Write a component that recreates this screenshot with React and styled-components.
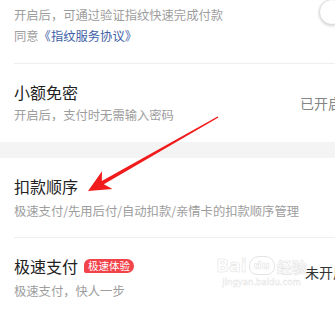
import React from "react";
import styled, { createGlobalStyle } from "styled-components";

const GlobalStyle = createGlobalStyle`
  html, body { margin: 0; padding: 0; background: #fff; overflow: hidden; }
  body { font-family: "Noto Sans CJK SC", "Noto Sans", sans-serif; }
`;

const Page = styled.div`
  position: relative;
  width: 375px;
  height: 313px;
  background: #fff;
  overflow: hidden;
`;

const Row = styled.div`
  display: flex;
  align-items: ${(p) => (p.$top ? "flex-start" : "center")};
  padding: ${(p) => p.$pad};
`;

const TextBlock = styled.div`
  flex: 1;
  min-width: 0;
  display: flex;
  flex-direction: column;
`;

const Title = styled.div`
  display: flex;
  align-items: center;
  gap: 6px;
  font-size: 16px;
  line-height: 22px;
  color: #222;
  white-space: nowrap;
`;

const Sub = styled.div`
  font-size: 12.3px;
  line-height: ${(p) => p.$lh || "18px"};
  color: #9d9d9d;
  margin-top: ${(p) => p.$mt || "0px"};
  white-space: nowrap;
`;

const Link = styled.span`
  color: #3f5ea6;
`;

const Divider = styled.div`
  height: 1px;
  margin-left: 14px;
  background: #eeeeee;
`;

const Band = styled.div`
  height: 16px;
  background: #f4f4f4;
`;

const Badge = styled.span`
  display: inline-flex;
  align-items: center;
  height: 14px;
  padding: 0 4px;
  border-radius: 6px 7px 7px 2px;
  background: #f2424a;
  color: #fff;
  font-size: 10.5px;
  line-height: 14px;
`;

const Value = styled.div`
  display: flex;
  align-items: center;
  gap: 5px;
  font-size: 14px;
  line-height: 20px;
  color: ${(p) => p.$color};
  padding-right: ${(p) => p.$pr};
  margin-bottom: ${(p) => p.$mb || "0px"};
  white-space: nowrap;
`;

const Knob = styled.div`
  width: 26px;
  height: 26px;
  margin-top: -6px;
  margin-right: 30px;
  border-radius: 50%;
  background: #fff;
  border: 1px solid #dcdcdc;
  box-shadow: 0 1px 3px rgba(0, 0, 0, 0.18);
  box-sizing: border-box;
`;

const Overlay = styled.svg`
  position: absolute;
  left: 0;
  top: 0;
  pointer-events: none;
`;

const Watermark = styled.div`
  position: absolute;
  left: 214px;
  top: 256px;
  width: 95px;
  display: flex;
  flex-direction: column;
  align-items: center;
  pointer-events: none;
  color: rgba(255, 255, 255, 0.7);
  -webkit-text-stroke: 0.6px #e4e4e4;
  font-family: "DejaVu Sans", sans-serif;
`;

const WmLogo = styled.div`
  display: flex;
  align-items: flex-end;
  gap: 2px;
  font-size: 17px;
  font-weight: bold;
  line-height: 17px;
`;

const WmPaw = styled.span`
  display: inline-flex;
  align-items: center;
  justify-content: center;
  width: 24px;
  height: 17px;
  border: 1px solid #e4e4e4;
  border-radius: 10px 10px 8px 8px;
  font-size: 11px;
  line-height: 11px;
`;

const WmCn = styled.span`
  font-family: "Noto Sans CJK SC", sans-serif;
  font-size: 15px;
  line-height: 17px;
`;

const WmUrl = styled.div`
  margin-top: 3px;
  font-size: 8.5px;
  line-height: 9px;
  -webkit-text-stroke: 0.4px #e4e4e4;
`;

const Chevron = () => (
  <svg width="7" height="12" viewBox="0 0 7 12">
    <path d="M1 1l5 5-5 5" fill="none" stroke="#bbb" strokeWidth="1.4" />
  </svg>
);

export default function App() {
  return (
    <>
      <GlobalStyle />
      <Page>
        <Row $top $pad="5px 0 16px 14px">
          <TextBlock>
            <Sub $lh="21px">开启后，可通过验证指纹快速完成付款</Sub>
            <Sub $lh="21px">
              同意<Link>《指纹服务协议》</Link>
            </Sub>
          </TextBlock>
          <Knob />
        </Row>
        <Divider />
        <Row $pad="17px 0 18px 14px">
          <TextBlock>
            <Title>小额免密</Title>
            <Sub $mt="3px">开启后，支付时无需输入密码</Sub>
          </TextBlock>
          <Value $color="#858585" $pr="21px">
            已开启
            <Chevron />
          </Value>
        </Row>
        <Band />
        <Row $pad="17px 0 17px 14px">
          <TextBlock>
            <Title>扣款顺序</Title>
            <Sub $mt="5px">极速支付/先用后付/自动扣款/亲情卡的扣款顺序管理</Sub>
          </TextBlock>
        </Row>
        <Divider />
        <Row $pad="17px 0 17px 14px">
          <TextBlock>
            <Title>
              极速支付
              <Badge>极速体验</Badge>
            </Title>
            <Sub $mt="5px">极速支付，快人一步</Sub>
          </TextBlock>
          <Value $color="#333" $pr="16px" $mb="12px">
            未开启
            <Chevron />
          </Value>
        </Row>
        <Watermark>
          <WmLogo>
            Bai<WmPaw>du</WmPaw>
            <WmCn>经验</WmCn>
          </WmLogo>
          <WmUrl>jingyan.baidu.com</WmUrl>
        </Watermark>
        <Overlay width="335" height="313" viewBox="0 0 335 313">
          <polygon
            points="88,191 112.5,189 103.8,184.3 218.4,117.6 217.6,116.4 101.8,180.9 102,171.2"
            fill="#f21b1b"
          />
        </Overlay>
      </Page>
    </>
  );
}
